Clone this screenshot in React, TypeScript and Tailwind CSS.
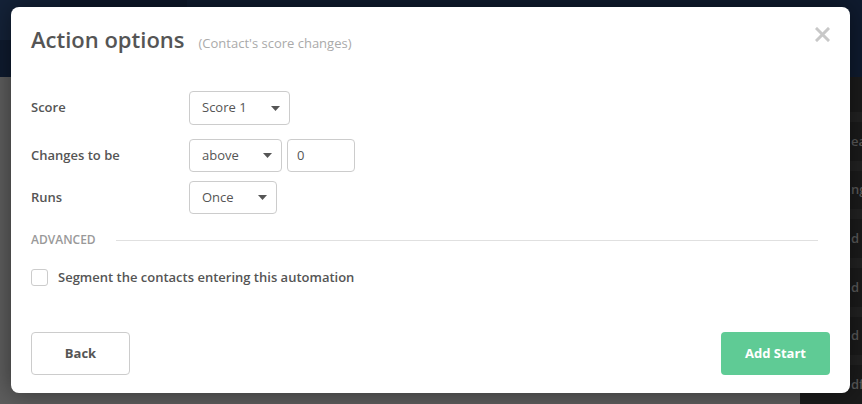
import React from 'react';

const sideRows = ['eading', 'nging', 'd email', 'd a tag', 'd SMS', 'dfy'];

const Caret: React.FC = () => (
  <svg width="9" height="5" viewBox="0 0 9 5" className="shrink-0">
    <polygon points="0,0 9,0 4.5,5" fill="#555555" />
  </svg>
);

const SelectBox: React.FC<{ value: string; width: string }> = ({ value, width }) => (
  <div
    className={`flex h-[33px] ${width} items-center justify-between rounded-[4px] border border-[#cccccc] bg-white pl-[12px] pr-[9px] text-[13px] text-[#555555]`}
  >
    <span>{value}</span>
    <Caret />
  </div>
);

const FieldRow: React.FC<{ label: string; className?: string; children: React.ReactNode }> = ({
  label,
  className,
  children,
}) => (
  <div className={`flex items-center ${className ?? ''}`}>
    <span className="w-[158px] shrink-0 text-[13px] font-semibold text-[#555555]">{label}</span>
    {children}
  </div>
);

export default function App() {
  return (
    <div className="relative h-[404px] w-[862px] overflow-hidden bg-[#5d5d5d] font-['Open_Sans',sans-serif]">
      {/* page behind the overlay */}
      <header className="flex h-[77px] bg-[#0f1b2f]">
        <div className="h-[40px] w-[60px] bg-[#142238]" />
        <div className="h-[40px] w-[127px] bg-[#0d1729]" />
      </header>
      <div className="flex h-[327px]">
        <main className="flex-1 bg-[#5d5d5d]" />
        <aside className="flex w-[62px] flex-col overflow-hidden bg-[#1b1b1b] pt-[35px]">
          {sideRows.map((row) => (
            <div key={row} className="flex h-[49px] flex-col">
              <div className="h-[10px] bg-[#222222]" />
              <div className="flex flex-1 items-center whitespace-nowrap pl-[51px] text-[13px] font-semibold text-[#5a5a5a]">
                {row}
              </div>
            </div>
          ))}
        </aside>
      </div>

      {/* modal */}
      <div className="absolute left-[11px] top-[7px] flex h-[386px] w-[839px] flex-col rounded-[8px] bg-white shadow-[0_0_24px_rgba(0,0,0,0.45)]">
        <button className="absolute right-[20px] top-[20px] flex h-[15px] w-[15px] items-center justify-center">
          <svg width="15" height="15" viewBox="0 0 15 15">
            <path d="M2 2 L13 13 M13 2 L2 13" stroke="#c8c8c8" strokeWidth="3" strokeLinecap="square" />
          </svg>
        </button>

        <div className="flex items-baseline pl-5 pt-[17px]">
          <h2 className="text-[22px] font-semibold leading-[30px] text-[#555555]">Action options</h2>
          <span className="ml-[14px] text-[13px] text-[#aaaaaa]">(Contact's score changes)</span>
        </div>

        <div className="mt-[37px] pl-5 pr-[32px]">
          <FieldRow label="Score" className="mb-[14px]">
            <div className="flex h-[34px] w-[101px] items-center justify-between rounded-[4px] border border-[#cccccc] bg-white pl-[12px] pr-[9px] text-[13px] text-[#555555]">
              <span>Score 1</span>
              <Caret />
            </div>
          </FieldRow>

          <FieldRow label="Changes to be" className="mb-[9px]">
            <SelectBox value="above" width="w-[93px]" />
            <div className="ml-[5px] flex h-[33px] w-[68px] items-center rounded-[4px] border border-[#cccccc] pl-[9px] text-[13px] text-[#555555]">
              0
            </div>
          </FieldRow>

          <FieldRow label="Runs">
            <SelectBox value="Once" width="w-[88px]" />
          </FieldRow>

          <div className="mt-[18px] flex items-center">
            <span className="text-[12px] font-semibold leading-[16px] text-[#999999]">ADVANCED</span>
            <div className="ml-[20px] h-px flex-1 bg-[#e0e0e0]" />
          </div>

          <label className="mt-[20px] flex items-center">
            <span className="h-[17px] w-[17px] rounded-[3px] border border-[#cccccc] bg-white" />
            <span className="ml-[10px] text-[13px] font-semibold text-[#555555]">
              Segment the contacts entering this automation
            </span>
          </label>
        </div>

        <div className="mt-auto flex justify-between px-5 pb-[18px]">
          <button className="h-[43px] w-[99px] rounded-[4px] border border-[#cccccc] bg-white text-[13px] font-bold text-[#555555]">
            Back
          </button>
          <button className="h-[43px] w-[109px] rounded-[4px] bg-[#5fcb95] text-[13px] font-bold text-white">
            Add Start
          </button>
        </div>
      </div>
    </div>
  );
}
